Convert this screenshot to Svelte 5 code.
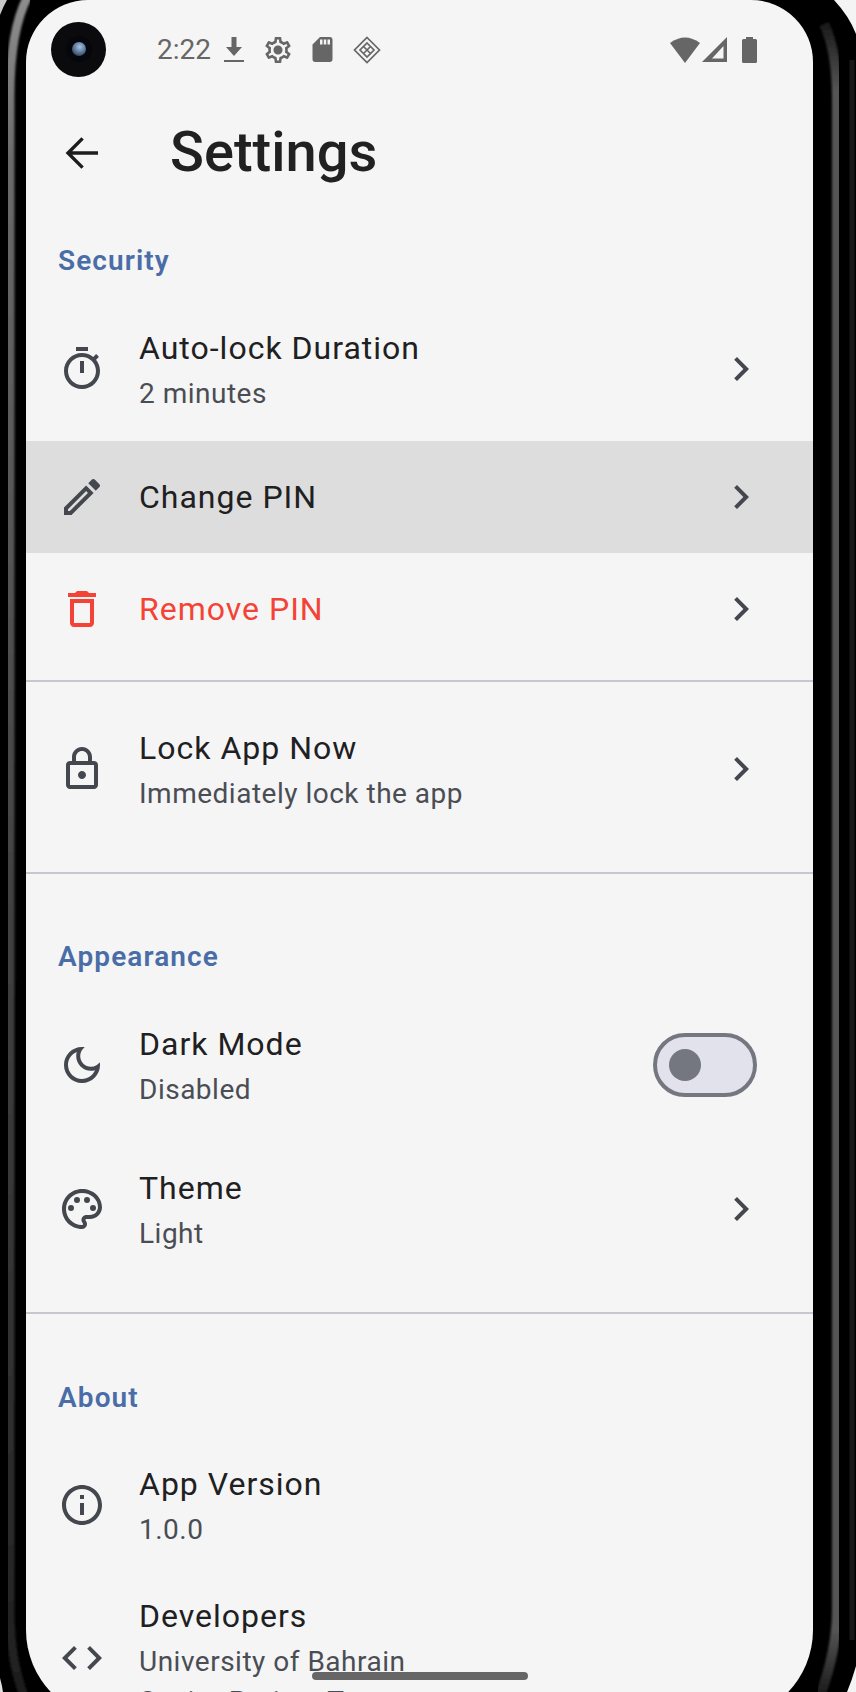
<script lang="ts">
  // Material icon paths, 24 unit box
  const icons = {
    chevron: "M10 6L8.59 7.41 13.17 12l-4.58 4.59L10 18l6-6z",
    timer: "M15 1H9v2h6V1zm-4 13h2V8h-2v6zm8.03-6.61l1.42-1.42c-.43-.51-.9-.99-1.41-1.41l-1.42 1.42C16.07 4.74 14.12 4 12 4c-4.97 0-9 4.03-9 9s4.02 9 9 9 9-4.03 9-9c0-2.12-.74-4.07-1.97-5.61zM12 20c-3.87 0-7-3.13-7-7s3.13-7 7-7 7 3.13 7 7-3.13 7-7 7z",
    edit: "M3 17.25V21h3.75L17.81 9.94l-3.75-3.75L3 17.25zM5.92 19H5v-.92l9.06-9.06.92.92L5.92 19zM20.71 5.63l-2.34-2.34c-.2-.2-.45-.29-.71-.29s-.51.09-.7.29l-1.83 1.83 3.75 3.75 1.83-1.83c.39-.39.39-1.02 0-1.41z",
    trash: "M6 19c0 1.1.9 2 2 2h8c1.1 0 2-.9 2-2V7H6v12zM8 9h8v10H8V9zm7.5-5l-1-1h-5l-1 1H5v2h14V4z",
    lock: "M18 8h-1V6c0-2.76-2.24-5-5-5S7 3.24 7 6v2H6c-1.1 0-2 .9-2 2v10c0 1.1.9 2 2 2h12c1.1 0 2-.9 2-2V10c0-1.1-.9-2-2-2zM9 6c0-1.66 1.34-3 3-3s3 1.34 3 3v2H9V6zm9 14H6V10h12v10zm-6-3c1.1 0 2-.9 2-2s-.9-2-2-2-2 .9-2 2 .9 2 2 2z",
    moon: "M9.37 5.51c-.18.64-.27 1.31-.27 1.99 0 4.08 3.32 7.4 7.4 7.4.68 0 1.35-.09 1.99-.27C17.45 17.19 14.93 19 12 19c-3.86 0-7-3.14-7-7 0-2.93 1.81-5.45 4.37-6.49zM12 3c-4.97 0-9 4.03-9 9s4.03 9 9 9 9-4.03 9-9c0-.46-.04-.92-.1-1.36-.98 1.37-2.58 2.26-4.4 2.26-2.98 0-5.4-2.42-5.4-5.4 0-1.81.89-3.42 2.26-4.4-.44-.06-.9-.1-1.36-.1z",
    palette: "M12 22C6.49 22 2 17.51 2 12S6.49 2 12 2s10 4.04 10 9c0 3.31-2.69 6-6 6h-1.77c-.28 0-.5.22-.5.5 0 .12.05.23.13.33.41.47.64 1.06.64 1.67 0 1.38-1.12 2.5-2.5 2.5zm0-18c-4.41 0-8 3.59-8 8s3.59 8 8 8c.28 0 .5-.22.5-.5 0-.16-.08-.28-.14-.35-.41-.46-.63-1.05-.63-1.65 0-1.38 1.12-2.5 2.5-2.5H16c2.21 0 4-1.79 4-4 0-3.86-3.59-7-8-7zM6.5 10a1.5 1.5 0 1 0 0 3 1.5 1.5 0 0 0 0-3zM9.5 6a1.5 1.5 0 1 0 0 3 1.5 1.5 0 0 0 0-3zM14.5 6a1.5 1.5 0 1 0 0 3 1.5 1.5 0 0 0 0-3zM17.5 10a1.5 1.5 0 1 0 0 3 1.5 1.5 0 0 0 0-3z",
    info: "M11 7h2v2h-2zm0 4h2v6h-2zm1-9C6.48 2 2 6.48 2 12s4.48 10 10 10 10-4.48 10-10S17.52 2 12 2zm0 18c-4.41 0-8-3.59-8-8s3.59-8 8-8 8 3.59 8 8-3.59 8-8 8z",
    code: "M9.4 16.6L4.8 12l4.6-4.6L8 6l-6 6 6 6 1.4-1.4zm5.2 0l4.6-4.6-4.6-4.6L16 6l6 6-6 6-1.4-1.4z",
  };
  const gear = "M19.43 12.98c.04-.32.07-.64.07-.98 0-.34-.03-.66-.07-.98l2.11-1.65c.19-.15.24-.42.12-.64l-2-3.46c-.09-.16-.26-.25-.44-.25-.06 0-.12.01-.17.03l-2.49 1c-.52-.4-1.08-.73-1.69-.98l-.38-2.65C14.46 2.18 14.25 2 14 2h-4c-.25 0-.46.18-.49.42l-.38 2.65c-.61.25-1.17.59-1.69.98l-2.49-1c-.06-.02-.12-.03-.18-.03-.17 0-.34.09-.43.25l-2 3.46c-.13.22-.07.49.12.64l2.11 1.65c-.04.32-.07.65-.07.98 0 .33.03.66.07.98l-2.11 1.65c-.19.15-.24.42-.12.64l2 3.46c.09.16.26.25.44.25.06 0 .12-.01.17-.03l2.49-1c.52.4 1.08.73 1.69.98l.38 2.65c.03.24.24.42.49.42h4c.25 0 .46-.18.49-.42l.38-2.65c.61-.25 1.17-.59 1.69-.98l2.49 1c.06.02.12.03.18.03.17 0 .34-.09.43-.25l2-3.46c.12-.22.07-.49-.12-.64l-2.11-1.65zm-1.98-1.71c.04.31.05.52.05.73 0 .21-.02.43-.05.73l-.14 1.13.89.7 1.08.84-.7 1.21-1.27-.51-1.04-.42-.9.68c-.43.32-.84.56-1.25.73l-1.06.43-.16 1.13-.2 1.35h-1.4l-.19-1.35-.16-1.13-1.06-.43c-.43-.18-.83-.41-1.23-.71l-.91-.7-1.06.43-1.27.51-.7-1.21 1.08-.84.89-.7-.14-1.13c-.03-.31-.05-.54-.05-.74s.02-.43.05-.73l.14-1.13-.89-.7-1.08-.84.7-1.21 1.27.51 1.04.42.9-.68c.43-.32.84-.56 1.25-.73l1.06-.43.16-1.13.2-1.35h1.39l.19 1.35.16 1.13 1.06.43c.43.18.83.41 1.23.71l.91.7 1.06-.43 1.27-.51.7 1.21-1.07.85-.89.7.14 1.13zM12 8.500a3.500 3.500 0 1 0 0 7 3.500 3.500 0 0 0 0-7z";
  const sdcard = "M18 2h-8L4 8v12c0 1.1.9 2 2 2h12c1.1 0 2-.9 2-2V4c0-1.1-.9-2-2-2zm-6 6h-2V4h2v4zm3 0h-2V4h2v4zm3 0h-2V4h2v4z";
</script>

{#snippet icon(d: string)}
  <svg class="icon" viewBox="0 0 24 24" aria-hidden="true"><path {d} /></svg>
{/snippet}

{#snippet tile(ic: string, title: string, subtitle = "", extra = "")}
  <div class="tile {extra}">
    {@render icon(ic)}
    <div class="text">
      <div class="title">{title}</div>
      {#if subtitle}<div class="sub">{subtitle}</div>{/if}
    </div>
    {@render icon(icons.chevron)}
  </div>
{/snippet}

<div class="phone">
  <!-- device bezel highlights -->
  <svg class="bezel" viewBox="0 0 856 1692" aria-hidden="true">
    <defs>
      <linearGradient id="leftStrip" x1="0" y1="0" x2="0" y2="1">
        <stop offset="0" stop-color="#8e8e8e" />
        <stop offset="0.1" stop-color="#6a6a6a" />
        <stop offset="0.5" stop-color="#444" />
        <stop offset="0.9" stop-color="#2a2a2a" />
        <stop offset="1" stop-color="#1e1e1e" />
      </linearGradient>
      <linearGradient id="rightStrip" x1="0" y1="0" x2="0" y2="1">
        <stop offset="0" stop-color="#1a1a1a" />
        <stop offset="0.04" stop-color="#555" />
        <stop offset="0.96" stop-color="#555" />
        <stop offset="1" stop-color="#1a1a1a" />
      </linearGradient>
      <filter id="soft"><feGaussianBlur stdDeviation="1.2" /></filter>
    </defs>
    <path d="M28 -4Q10 30 10 95V1610Q10 1660 24 1696" fill="none" stroke="url(#leftStrip)" stroke-width="9" filter="url(#soft)" />
    <path d="M824 24Q837 50 837 100V1610Q837 1650 820 1696" fill="none" stroke="url(#rightStrip)" stroke-width="10" filter="url(#soft)" />
    <path d="M852 60V1640" stroke="#181818" stroke-width="5" />
    <path d="M834 0Q849 16 856 34V0Z" fill="#f4f4f4" />
    <path d="M0 0H7Q3 7 0 15Z" fill="#c8c8c8" />
    <path d="M856 1666Q852 1680 847 1692H856Z" fill="#f4f4f4" />
    <path d="M0 1678Q2 1685 3 1692H0Z" fill="#e0e0e0" />
  </svg>

  <div class="screen">
    <div class="status">
      <span class="time">2:22</span>
      <svg class="st" width="20" height="25" viewBox="0 0 20 25"><path d="M7.5 0h5v10H18l-8 9-8-9h5.500zM0 23h20v2H0z" /></svg>
      <svg class="st nudge" width="26" height="26" viewBox="2 2 20 20"><path d={gear} /></svg>
      <svg class="st nudge" width="21" height="25" viewBox="4 2 16 20"><path d={sdcard} /></svg>
      <svg class="st" width="28" height="28" viewBox="0 0 28 28"><path d="M14 1.500 26.500 14 14 26.500 1.500 14Z M14 7 21 14 14 21 7 14Z M10.500 10.500 17.500 17.500 M17.500 10.500 10.500 17.500" fill="none" stroke="#666" stroke-width="1.700" /></svg>
      <span class="right">
        <svg class="st" width="30" height="26" viewBox="0 0 30 26"><path d="M0 6Q15 -5 30 6L15 26Z" /></svg>
        <svg class="st" width="25" height="25" viewBox="0 0 25 25"><path fill-rule="evenodd" d="M25 0V25H0ZM21.500 9 10 21.500H21.500Z" /></svg>
        <svg class="st batt" width="15" height="26" viewBox="0 0 15 26"><path d="M4 0h7v2h2.500q1.500 0 1.500 1.500v21q0 1.500-1.500 1.500h-12Q0 26 0 24.500v-21Q0 2 1.500 2H4z" /></svg>
      </span>
    </div>

    <header class="appbar">
      <div class="leading">
        <svg class="back" viewBox="0 0 24 24" aria-hidden="true"><path d="M20 12H5.200M12.300 4.700 5 12l7.300 7.300" /></svg>
      </div>
      <h1>Settings</h1>
    </header>

    <div class="section-label">Security</div>
    {@render tile(icons.timer, "Auto-lock Duration", "2 minutes")}
    {@render tile(icons.edit, "Change PIN", "", "one active")}
    {@render tile(icons.trash, "Remove PIN", "", "one danger")}
    <div class="divider"></div>
    {@render tile(icons.lock, "Lock App Now", "Immediately lock the app")}
    <div class="spacer"></div>
    <div class="divider"></div>
    <div class="spacer"></div>

    <div class="section-label">Appearance</div>
    <div class="tile">
      {@render icon(icons.moon)}
      <div class="text">
        <div class="title">Dark Mode</div>
        <div class="sub">Disabled</div>
      </div>
      <div class="switch"><span class="thumb"></span></div>
    </div>
    {@render tile(icons.palette, "Theme", "Light")}
    <div class="spacer"></div>
    <div class="divider"></div>
    <div class="spacer"></div>

    <div class="section-label about">About</div>
    <div class="tile">
      {@render icon(icons.info)}
      <div class="text">
        <div class="title">App Version</div>
        <div class="sub">1.0.0</div>
      </div>
    </div>
    <div class="tile three">
      {@render icon(icons.code)}
      <div class="text">
        <div class="title">Developers</div>
        <div class="sub">University of Bahrain</div>
        <div class="sub">Senior Project Team</div>
      </div>
    </div>
  </div>

  <div class="camera"><span class="lens"><span class="glare"></span></span></div>
  <div class="home"></div>
</div>

<style>
  :global(body) {
    margin: 0;
    background: #fff;
  }

  .phone {
    position: relative;
    width: 856px;
    height: 1692px;
    background: #000;
    overflow: hidden;
    font-family: Roboto, "Liberation Sans", sans-serif;
  }

  .bezel {
    position: absolute;
    inset: 0;
    width: 856px;
    height: 1692px;
  }

  .screen {
    position: relative;
    box-sizing: border-box;
    margin-left: 26px;
    width: 787px;
    height: 1720px;
    background: #f5f5f5;
    border-radius: 62px 62px 90px 90px;
    overflow: hidden;
  }

  .status {
    display: flex;
    align-items: center;
    gap: 20px;
    height: 97px;
    padding: 2px 56px 0 131px;
    box-sizing: border-box;
  }

  .time {
    width: 53px;
    margin-right: -6px;
    font-size: 28px;
    color: #666;
  }

  .st {
    display: block;
    fill: #666;
  }

  .nudge {
    margin-left: 1px;
  }

  .right {
    display: flex;
    align-items: center;
    gap: 2px;
    margin-left: auto;
  }

  .batt {
    margin-left: 13px;
  }

  .appbar {
    display: flex;
    align-items: center;
    box-sizing: border-box;
    height: 112px;
    padding-bottom: 2px;
  }

  .leading {
    display: flex;
    justify-content: center;
    width: 112px;
    margin-right: 32px;
    padding-top: 2px;
  }

  .back {
    display: block;
    width: 48px;
    height: 48px;
    fill: none;
    stroke: #1d1d1d;
    stroke-width: 1.7;
  }

  h1 {
    margin: 0;
    font-size: 56px;
    font-weight: 500;
    color: #212121;
  }

  .section-label {
    padding: 32px 32px 16px;
    font-size: 28px;
    line-height: 40px;
    font-weight: 600;
    letter-spacing: 1.1px;
    color: #4a6da7;
  }

  .section-label.about {
    padding-top: 33px;
    padding-bottom: 15px;
  }

  .icon {
    display: block;
    flex: none;
    width: 48px;
    height: 48px;
    fill: #44474e;
  }

  .tile {
    display: flex;
    align-items: center;
    gap: 32px;
    box-sizing: border-box;
    min-height: 144px;
    padding: 0 48px 0 32px;
  }

  .tile.one {
    min-height: 112px;
  }

  .tile.three {
    padding-top: 15px;
    padding-bottom: 14px;
  }

  .tile.active {
    background: #dddddd;
  }

  .text {
    flex: 1;
    min-width: 0;
    padding-left: 1px;
    padding-bottom: 1px;
  }

  .title {
    font-size: 32px;
    line-height: 48px;
    letter-spacing: 1px;
    color: #1e2022;
  }

  .sub {
    margin-top: 2px;
    font-size: 28px;
    line-height: 40px;
    letter-spacing: 0.5px;
    color: #4a4d54;
  }

  .sub + .sub {
    margin-top: 0;
  }

  .danger .title {
    color: #f44336;
  }

  .danger .icon:first-child {
    fill: #f44336;
  }

  .divider {
    height: 2px;
    margin: 15px 0;
    background: #c6c7ce;
  }

  .spacer {
    height: 16px;
  }

  .switch {
    display: flex;
    align-items: center;
    box-sizing: border-box;
    width: 104px;
    height: 64px;
    margin-right: 8px;
    padding-left: 12px;
    border: 4px solid #74777f;
    border-radius: 32px;
    background: #e1e2ec;
  }

  .thumb {
    width: 32px;
    height: 32px;
    border-radius: 50%;
    background: #74777f;
  }

  .camera {
    position: absolute;
    left: 51px;
    top: 21.500px;
    display: flex;
    align-items: center;
    justify-content: center;
    width: 55px;
    height: 55px;
    border-radius: 50%;
    background: radial-gradient(circle, #0b0b0e 0, #0b0b0e 70%, #000 74%);
  }

  .lens {
    position: relative;
    width: 26px;
    height: 26px;
    border-radius: 50%;
    background: #05070c;
  }

  .glare {
    position: absolute;
    left: 6px;
    top: 6px;
    width: 14px;
    height: 14px;
    border-radius: 50%;
    background: radial-gradient(circle at 55% 35%, #a9c4e2 0, #5f7c9e 45%, #141c28 100%);
  }

  .home {
    position: absolute;
    left: 312px;
    top: 1672px;
    width: 216px;
    height: 8px;
    border-radius: 4px;
    background: #666;
  }
</style>
